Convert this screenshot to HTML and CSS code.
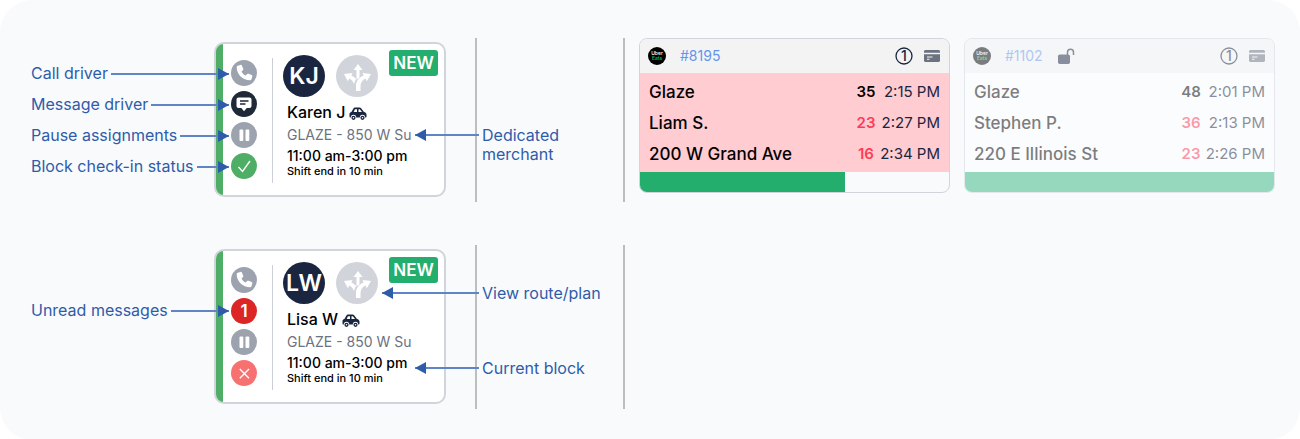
FILE: index.html
```html
<!DOCTYPE html>
<html lang="en">
<head>
    <meta charset="UTF-8">
    <meta name="viewport" content="width=device-width, initial-scale=1.0">
    <title>Driver and order cards</title>
    <link rel="stylesheet" href="styles.css">
</head>
<body>
    <!-- shared icons -->
    <svg class="sprite" aria-hidden="true">
        <symbol id="icon-phone" viewBox="0 0 26 26">
            <path d="M6.700 5.800l2.700-.9c.7-.2 1.300.1 1.500.7l1.300 3.100c.2.600.1 1.100-.3 1.500l-1.400 1.200c.9 1.900 2.300 3.300 4.300 4.200l1.300-1.500c.4-.4 1-.5 1.500-.3l3 1.300c.6.300.9.900.7 1.500l-.8 2.700c-.2.600-.7 1-1.400 1C11.700 20.300 5.700 14.400 5.700 7.200c0-.7.400-1.200 1-1.400z"/>
        </symbol>
        <symbol id="icon-message" viewBox="0 0 26 26">
            <path d="M7.500 6.500h11c1.100 0 2 .9 2 2v6.500c0 1.100-.9 2-2 2h-2.700L13 20.300 10.300 17H7.500c-1.100 0-2-.9-2-2V8.500c0-1.100.9-2 2-2z"/>
            <path class="cut" d="M9 10h8.500M9 13h5.500"/>
        </symbol>
        <symbol id="icon-pause" viewBox="0 0 26 26">
            <rect x="8.500" y="7.500" width="3.800" height="11.500" rx="1"/>
            <rect x="14.500" y="7.500" width="3.800" height="11.500" rx="1"/>
        </symbol>
        <symbol id="icon-check" viewBox="0 0 26 26">
            <path class="stroke" d="M7.500 14l4 4.500 7.500-10.500"/>
        </symbol>
        <symbol id="icon-close" viewBox="0 0 26 26">
            <path class="stroke" d="M8.800 9l9.200 9.200M18 9l-9.200 9.200"/>
        </symbol>
        <symbol id="icon-route" viewBox="0 0 42 42">
            <path d="M22 9l4.500 6h-3v7.500l-3 2V15h-3z"/>
            <path d="M35 19l-8.500-1 1.200 2.600C23 22.500 20 26 20 31v5h4.500v-5c0-3.500 2-6 5-7.500l1.300 2.700z"/>
            <path d="M8 19l8.500-1-1.200 2.600c2 .8 3.500 2 4.800 3.500-1 1.500-1.700 3.200-1.900 5.200-1-2.800-2.600-4.600-5-5.800l-1.300 2.700z"/>
        </symbol>
        <symbol id="icon-car" viewBox="0 0 18 14">
            <path fill-rule="evenodd" d="M4.300 1.700C4.600.9 5.200.5 6 .5h4.600c.6 0 1.100.2 1.500.7L15 5c1.500.2 2.500 1.300 2.500 2.800v1.700c0 .6-.4 1-1 1h-.3a2.700 2.700 0 0 0-5.400 0H7.200a2.700 2.700 0 0 0-5.400 0h-.3c-.6 0-1-.4-1-1V7c0-1.100.8-1.900 1.900-2.100zM5.800 2.400L4.700 5H8V2.200H6.100c-.1 0-.2.100-.3.200zM9.500 2.200V5H13l-2-2.600c-.1-.1-.2-.2-.4-.2z"/>
            <path fill-rule="evenodd" d="M4.500 8.700a2.100 2.100 0 1 0 0 4.200 2.100 2.100 0 0 0 0-4.200zm0 1.300a.8.800 0 1 1 0 1.600.8.800 0 0 1 0-1.600zM13.500 8.700a2.100 2.100 0 1 0 0 4.200 2.100 2.100 0 0 0 0-4.200zm0 1.300a.8.800 0 1 1 0 1.600.8.800 0 0 1 0-1.600z"/>
        </symbol>
        <symbol id="icon-count" viewBox="0 0 18 18">
            <circle cx="9" cy="9" r="8" fill="none" stroke="currentColor" stroke-width="1.300"/>
            <text x="9" y="14" text-anchor="middle">1</text>
        </symbol>
        <symbol id="icon-card" viewBox="0 0 16 12">
            <path fill-rule="evenodd" d="M1.500 0h13C15.300 0 16 .7 16 1.500V2.700H0V1.500C0 .7.700 0 1.500 0zM0 4.200h16v6.300c0 .8-.7 1.500-1.500 1.500h-13C.7 12 0 11.300 0 10.500zM3 6.500v1h5.500v-1zM3 8.700v1h2.500v-1z"/>
        </symbol>
        <symbol id="icon-lock" viewBox="0 0 18 18">
            <rect x="1" y="7.500" width="12" height="9.500" rx="1.800"/>
            <path d="M10.500 8V5.200a3 3 0 0 1 6 0V8" fill="none" stroke="currentColor" stroke-width="1.500"/>
        </symbol>
        <symbol id="icon-uber" viewBox="0 0 18 18">
            <circle cx="9" cy="9" r="9" fill="#000"/>
            <text x="9" y="8" text-anchor="middle" fill="#fff">Uber</text>
            <text x="9" y="13" text-anchor="middle" fill="#06c167">Eats</text>
        </symbol>
    </svg>

    <main class="board">
        <section class="row">
            <ul class="labels">
                <li><span>Call driver</span><i class="arrow arrow-right"></i></li>
                <li><span>Message driver</span><i class="arrow arrow-right"></i></li>
                <li><span>Pause assignments</span><i class="arrow arrow-right"></i></li>
                <li><span>Block check-in status</span><i class="arrow arrow-right"></i></li>
            </ul>
            <article class="driver">
                <div class="actions">
                    <button type="button" class="action" aria-label="Call driver"><svg><use href="#icon-phone"/></svg></button>
                    <button type="button" class="action dark" aria-label="Message driver"><svg><use href="#icon-message"/></svg></button>
                    <button type="button" class="action" aria-label="Pause assignments"><svg><use href="#icon-pause"/></svg></button>
                    <button type="button" class="action ok" aria-label="Checked in"><svg><use href="#icon-check"/></svg></button>
                </div>
                <div class="info">
                    <div class="top">
                        <span class="avatar">KJ</span>
                        <button type="button" class="route" aria-label="View route"><svg><use href="#icon-route"/></svg></button>
                        <span class="badge">NEW</span>
                    </div>
                    <div class="name">Karen J <svg><use href="#icon-car"/></svg></div>
                    <div class="merchant">GLAZE - 850 W Su</div>
                    <div class="shift">11:00 am-3:00 pm</div>
                    <div class="note">Shift end in 10 min</div>
                </div>
            </article>
            <div class="callouts callouts-merchant">
                <p><i class="arrow arrow-left"></i>Dedicated<br>merchant</p>
            </div>
            <div class="orders">
                <article class="order late">
                    <header>
                        <svg class="uber" role="img" aria-label="Uber Eats"><use href="#icon-uber"/></svg>
                        <a href="#8195">#8195</a>
                        <svg class="count"><use href="#icon-count"/></svg>
                        <svg class="card"><use href="#icon-card"/></svg>
                    </header>
                    <table>
                        <tr><td>Glaze</td><td class="min">35</td><td class="time">2:15 PM</td></tr>
                        <tr><td>Liam S.</td><td class="min red">23</td><td class="time">2:27 PM</td></tr>
                        <tr><td>200 W Grand Ave</td><td class="min red">16</td><td class="time">2:34 PM</td></tr>
                    </table>
                    <div class="progress"><div class="bar" style="width: 66.500%"></div></div>
                </article>
                <article class="order done">
                    <header>
                        <svg class="uber" role="img" aria-label="Uber Eats"><use href="#icon-uber"/></svg>
                        <a href="#1102">#1102</a>
                        <svg class="lock"><use href="#icon-lock"/></svg>
                        <svg class="count"><use href="#icon-count"/></svg>
                        <svg class="card"><use href="#icon-card"/></svg>
                    </header>
                    <table>
                        <tr><td>Glaze</td><td class="min">48</td><td class="time">2:01 PM</td></tr>
                        <tr><td>Stephen P.</td><td class="min red">36</td><td class="time">2:13 PM</td></tr>
                        <tr><td>220 E Illinois St</td><td class="min red">23</td><td class="time">2:26 PM</td></tr>
                    </table>
                    <div class="progress"><div class="bar" style="width: 100%"></div></div>
                </article>
            </div>
        </section>

        <section class="row">
            <ul class="labels labels-unread">
                <li><span>Unread messages</span><i class="arrow arrow-right"></i></li>
            </ul>
            <article class="driver">
                <div class="actions">
                    <button type="button" class="action" aria-label="Call driver"><svg><use href="#icon-phone"/></svg></button>
                    <button type="button" class="action unread">1</button>
                    <button type="button" class="action" aria-label="Pause assignments"><svg><use href="#icon-pause"/></svg></button>
                    <button type="button" class="action missed" aria-label="Not checked in"><svg><use href="#icon-close"/></svg></button>
                </div>
                <div class="info">
                    <div class="top">
                        <span class="avatar">LW</span>
                        <button type="button" class="route" aria-label="View route"><svg><use href="#icon-route"/></svg></button>
                        <span class="badge">NEW</span>
                    </div>
                    <div class="name">Lisa W <svg><use href="#icon-car"/></svg></div>
                    <div class="merchant">GLAZE - 850 W Su</div>
                    <div class="shift">11:00 am-3:00 pm</div>
                    <div class="note">Shift end in 10 min</div>
                </div>
            </article>
            <div class="callouts callouts-route">
                <p><i class="arrow arrow-left arrow-long"></i>View route/plan</p>
                <p><i class="arrow arrow-left"></i>Current block</p>
            </div>
        </section>
    </main>
</body>
</html>
```
FILE: styles.css
```css
* {
    box-sizing: border-box;
}
body {
    margin: 0;
    background-color: #fff;
    font-family: Inter, "Liberation Sans", sans-serif;
    color: #000;
}
.sprite {
    display: none;
}
.board {
    display: flex;
    flex-direction: column;
    gap: 43px;
    padding: 38px 25px 31px 31px;
    background-color: #f8fafc;
    border-radius: 32px;
}
.row {
    display: flex;
    align-items: flex-start;
    min-height: 164px;
}

/* Blue annotations */
.labels {
    list-style: none;
    width: 198px;
    margin: 20px -15px 0 0;
    padding: 0;
    color: #2f5caa;
    font-size: 16px;
    position: relative;
    z-index: 2; /* arrows run over the driver card */
}
.labels-unread {
    margin-top: 50px;
}
.labels li {
    display: flex;
    align-items: center;
    gap: 3px;
    height: 31px;
    white-space: nowrap;
}
.labels span {
    padding-bottom: 2px;
}
.arrow {
    display: block;
    flex-grow: 1;
    height: 2px;
    background-color: #5f85c6;
    position: relative;
}
.arrow::after {
    content: "";
    position: absolute;
    top: -5px;
    border: 6px solid transparent;
}
.arrow-right::after {
    right: 0;
    border-left: 11px solid #2f5caa;
    border-right: 0;
}
.arrow-left::after {
    left: 0;
    border-right: 11px solid #2f5caa;
    border-left: 0;
}
.callouts {
    align-self: stretch;
    display: flex;
    flex-direction: column;
    width: 150px;
    margin-left: 29px;
    padding-left: 5px;
    border-left: 2px solid #bdbdbd;
    border-right: 2px solid #bdbdbd;
    color: #2f5caa;
    font-size: 16px;
    line-height: 19px;
}
.callouts-merchant {
    padding-top: 88px;
}
.callouts-route {
    padding-top: 39px;
    gap: 56px;
}
.callouts p {
    margin: 0;
    position: relative;
}
.callouts .arrow {
    position: absolute;
    top: 8px;
    right: 100%;
    width: 64px;
    margin-right: 3px;
}
.callouts .arrow-long {
    width: 97px;
}

/* Driver card */
.driver {
    display: flex;
    width: 232px;
    min-height: 155px;
    margin-top: 4px;
    background: linear-gradient(to right, #4fae66 7px, #fff 7px);
    border: 2px solid #d1d5db;
    border-radius: 10px;
}
.actions {
    display: flex;
    flex-direction: column;
    gap: 5px;
    width: 57px;
    margin: 14px 0 12px;
    padding: 2px 0 0 15px;
    border-right: 1px solid #cbd0d8;
}
.action {
    width: 26px;
    height: 26px;
    padding: 0;
    border: none;
    border-radius: 50%;
    background-color: #9ca3af;
    color: #fff;
    font: 600 17px Inter, "Liberation Sans", sans-serif;
    cursor: pointer;
}
.action svg {
    display: block;
    width: 26px;
    height: 26px;
    fill: #fff;
}
.stroke {
    fill: none;
    stroke: #fff;
    stroke-width: 1.4;
}
.cut {
    fill: none;
    stroke: #1f2937;
    stroke-width: 1.3;
}
.dark {
    background-color: #1f2937;
}
.ok {
    background-color: #4fae66;
}
.unread {
    background-color: #dc2626;
}
.missed {
    background-color: #f87171;
}
.info {
    flex: 1;
    padding: 6px 6px 0 14px;
}
.top {
    display: flex;
    align-items: flex-start;
    margin-left: -4px;
}
.avatar, .route {
    width: 42px;
    height: 42px;
    margin-top: 5px;
    border-radius: 50%;
}
.avatar {
    display: flex;
    align-items: center;
    justify-content: center;
    background-color: #1a2540;
    color: #fff;
    font-size: 23px;
    font-weight: 600;
}
.route {
    margin-left: 11px;
    padding: 0;
    border: none;
    background-color: #d1d5db;
    cursor: pointer;
}
.route svg {
    display: block;
    width: 42px;
    height: 42px;
    fill: #fff;
}
.badge {
    width: 49px;
    margin-left: auto;
    border-radius: 3px;
    background-color: #23ae6d;
    color: #fff;
    font-size: 17px;
    font-weight: 600;
    line-height: 26px;
    text-align: center;
}
.name {
    display: flex;
    align-items: center;
    gap: 4px;
    margin-top: 4px;
    font-size: 16px;
    font-weight: 500;
    line-height: 22px;
}
.name svg {
    width: 18px;
    height: 14px;
    margin-top: 3px;
    fill: #1a2540;
}
.merchant {
    color: #6b7280;
    font-size: 14px;
    line-height: 24px;
}
.shift {
    font-size: 14px;
    font-weight: 500;
    line-height: 18px;
}
.note {
    font-size: 11px;
    font-weight: 500;
    line-height: 12px;
}

/* Order cards */
.orders {
    display: flex;
    flex: 1;
    gap: 14px;
    margin-left: 14px;
}
.order {
    flex: 1;
    border: 1px solid #d1d5db;
    border-radius: 8px;
    overflow: hidden;
}
.order header {
    display: flex;
    align-items: center;
    height: 34px;
    padding: 0 9px 0 8px;
    background-color: #f3f3f3;
}
.order a {
    margin: 0 auto 0 14px;
    padding-bottom: 1px;
    color: #6495ed;
    font-size: 14px;
    text-decoration: none;
}
.uber {
    width: 18px;
    height: 18px;
    font-size: 5px;
    font-weight: 500;
}
.count {
    width: 18px;
    height: 18px;
    margin-right: 11px;
    color: #1a2540;
    fill: #1a2540;
    font-size: 14px;
    font-weight: 500;
}
.card {
    width: 16px;
    height: 12px;
    fill: #6b7280;
}
.lock {
    width: 18px;
    height: 18px;
    color: #1a2540;
    fill: #1a2540;
}
.order table {
    width: 100%;
    padding: 3px 9px;
    border-spacing: 0;
    background-color: #fff;
}
.order td {
    height: 31px;
    padding: 0;
    font-size: 17px;
    font-weight: 500;
}
.order .min {
    width: 20px;
    font-size: 15px;
    font-weight: 600;
    text-align: center;
}
.order .time {
    width: 64px;
    color: #1a2540;
    font-size: 15px;
    font-weight: 400;
    text-align: right;
}
.order .red {
    color: #ff3b57;
}
.late table {
    background-color: #ffccd1;
}
.progress {
    height: 20px;
}
.bar {
    height: 100%;
    background-color: #23ae6d;
}
.done {
    background-color: #fff;
    opacity: 0.5;
}
.done a {
    margin-right: 14px;
}
.done .lock {
    margin-right: auto;
}
.done .bar {
    background-color: #37b880;
}
```
